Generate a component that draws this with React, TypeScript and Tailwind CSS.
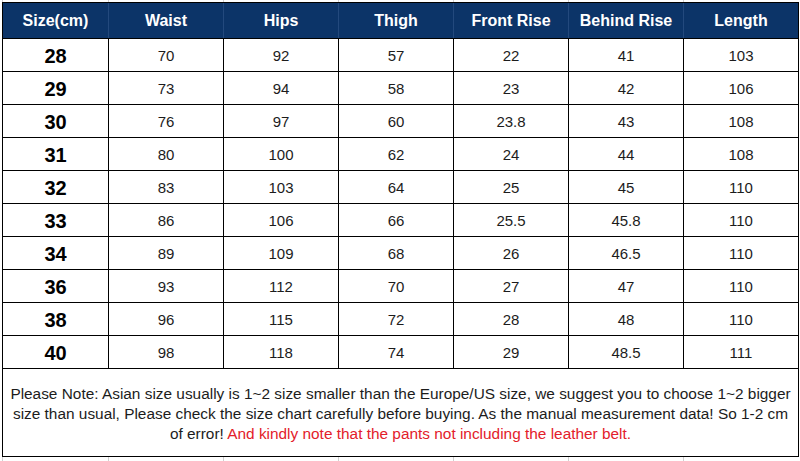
const headers = ["Size(cm)", "Waist", "Hips", "Thigh", "Front Rise", "Behind Rise", "Length"];

const rows = [
    ["28", "70", "92", "57", "22", "41", "103"],
    ["29", "73", "94", "58", "23", "42", "106"],
    ["30", "76", "97", "60", "23.8", "43", "108"],
    ["31", "80", "100", "62", "24", "44", "108"],
    ["32", "83", "103", "64", "25", "45", "110"],
    ["33", "86", "106", "66", "25.5", "45.8", "110"],
    ["34", "89", "109", "68", "26", "46.5", "110"],
    ["36", "93", "112", "70", "27", "47", "110"],
    ["38", "96", "115", "72", "28", "48", "110"],
    ["40", "98", "118", "74", "29", "48.5", "111"],
];

const widths = ["w-[106px]", "w-[115px]", "w-[115px]", "w-[115px]", "w-[115px]", "w-[115px]", "w-[115px]"];

const GridStrip = ({ h }: { h: string }) => (
    <div className={`flex pl-[2px] ${h}`}>
        {widths.map((w, i) => (
            <div key={i} className={`${w} border-l border-[#d0d0d0]`} />
        ))}
    </div>
);

const App = () => {
    return (
        <div className="w-[800px] h-[461px] bg-white overflow-hidden font-['Liberation_Sans',Arial,sans-serif]">
            <GridStrip h="h-[2px]" />
            <div className="pl-[2px]">
                <table className="table-fixed border-collapse w-[796px]">
                    <colgroup>
                        {widths.map((w, i) => (
                            <col key={i} className={w} />
                        ))}
                    </colgroup>
                    <thead>
                        <tr className="h-[36px] bg-[#0c3468]">
                            {headers.map((h, i) => (
                                <th
                                    key={h}
                                    className={`p-0 text-center text-white font-bold text-[16px] border-y border-black ${
                                        i === 0 ? "border-l border-l-black" : "border-l border-l-[#23497d]"
                                    } ${i === headers.length - 1 ? "border-r border-r-black" : ""}`}
                                >
                                    {h}
                                </th>
                            ))}
                        </tr>
                    </thead>
                    <tbody>
                        {rows.map((r) => (
                            <tr key={r[0]} className="h-[33px]">
                                {r.map((v, i) => (
                                    <td
                                        key={i}
                                        className={`p-0 pt-[2px] text-center border border-black ${
                                            i === 0 ? "font-bold text-[20px] text-black" : "text-[15px] text-[#1c1c1c]"
                                        }`}
                                    >
                                        {v}
                                    </td>
                                ))}
                            </tr>
                        ))}
                        <tr className="h-[88px]">
                            <td colSpan={7} className="border border-black px-0 pt-[2px] text-center text-[15.4px] leading-[20px] text-[#1c1c1c] whitespace-nowrap">
                                Please Note: Asian size usually is 1~2 size smaller than the Europe/US size, we suggest you to choose 1~2 bigger
                                <br />
                                size than usual, Please check the size chart carefully before buying. As the manual measurement data! So 1-2 cm
                                <br />
                                of error! <span className="text-[#e3202a]">And kindly note that the pants not including the leather belt.</span>
                            </td>
                        </tr>
                    </tbody>
                </table>
            </div>
            <GridStrip h="h-[4px]" />
        </div>
    );
};

export default App;
